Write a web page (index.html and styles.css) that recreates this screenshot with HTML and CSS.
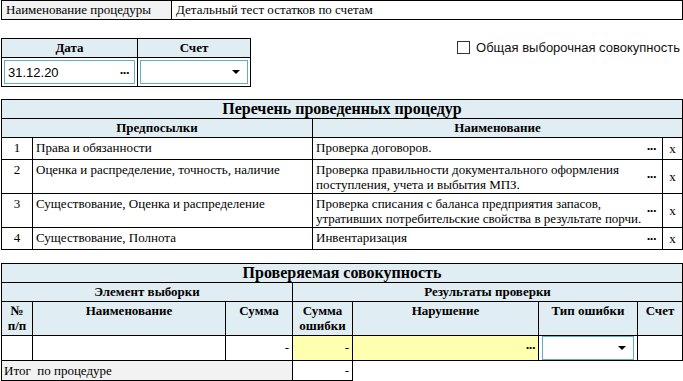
FILE: index.html
```html
<!DOCTYPE html>
<html lang="ru">
<head>
  <meta charset="UTF-8" />
  <title>Процедура</title>
  <link rel="stylesheet" href="styles.css">
</head>
<body>
  <table class="grid proc">
    <tr>
      <td class="label">Наименование процедуры</td>
      <td>Детальный тест остатков по счетам</td>
    </tr>
  </table>

  <div class="params">
    <table class="grid dates">
      <tr class="head">
        <th>Дата</th>
        <th>Счет</th>
      </tr>
      <tr class="inputs">
        <td>
          <div class="field">
            <span>31.12.20</span>
            <span class="dots">...</span>
          </div>
        </td>
        <td>
          <div class="field">
            <span></span>
            <span class="arrow"></span>
          </div>
        </td>
      </tr>
    </table>
    <label class="check">
      <span class="box"></span>
      Общая выборочная совокупность
    </label>
  </div>

  <table class="grid list">
    <tr class="title">
      <th colspan="5">Перечень проведенных процедур</th>
    </tr>
    <tr class="head">
      <th colspan="2">Предпосылки</th>
      <th colspan="3">Наименование</th>
    </tr>
    <tr class="short">
      <td class="num">1</td>
      <td class="pre">Права и обязанности</td>
      <td class="name">Проверка договоров.</td>
      <td class="more"><span class="dots">...</span></td>
      <td class="del">x</td>
    </tr>
    <tr class="tall">
      <td class="num">2</td>
      <td class="pre">Оценка и распределение, точность, наличие</td>
      <td class="name">Проверка правильности документального оформления поступления, учета и выбытия МПЗ.</td>
      <td class="more"><span class="dots">...</span></td>
      <td class="del">x</td>
    </tr>
    <tr class="tall">
      <td class="num">3</td>
      <td class="pre">Существование, Оценка и распределение</td>
      <td class="name">Проверка списания с баланса предприятия запасов, утративших потребительские свойства в результате порчи.</td>
      <td class="more"><span class="dots">...</span></td>
      <td class="del">x</td>
    </tr>
    <tr class="short">
      <td class="num">4</td>
      <td class="pre">Существование, Полнота</td>
      <td class="name">Инвентаризация</td>
      <td class="more"><span class="dots">...</span></td>
      <td class="del">x</td>
    </tr>
  </table>

  <table class="grid sample">
    <tr class="title">
      <th colspan="7">Проверяемая совокупность</th>
    </tr>
    <tr class="head">
      <th colspan="3">Элемент выборки</th>
      <th colspan="4">Результаты проверки</th>
    </tr>
    <tr class="cols">
      <th class="c-num">№<br>п/п</th>
      <th class="c-name">Наименование</th>
      <th class="c-sum">Сумма</th>
      <th class="c-err">Сумма<br>ошибки</th>
      <th class="c-viol">Нарушение</th>
      <th class="c-type">Тип ошибки</th>
      <th>Счет</th>
    </tr>
    <tr class="data">
      <td></td>
      <td></td>
      <td class="amount">-</td>
      <td class="amount yellow">-</td>
      <td class="amount yellow"><span class="dots">...</span></td>
      <td class="select-cell">
        <div class="field">
          <span></span>
          <span class="arrow"></span>
        </div>
      </td>
      <td></td>
    </tr>
    <tr class="total">
      <td colspan="3" class="label">Итог&nbsp; по процедуре</td>
      <td class="amount">-</td>
    </tr>
  </table>
</body>
</html>
```

FILE: styles.css
```css
body {
  margin: 0;
  padding: 0 0 0 1px;
  font-family: "Liberation Serif", "Times New Roman", serif;
  font-size: 13px;
  color: #000;
  background: #fff;
}

.grid {
  border-collapse: collapse;
}

.grid td,
.grid th {
  border: 1px solid #000;
  padding: 0 3px;
}

.grid th {
  background: #e0eef3;
  font-weight: bold;
  font-size: 13px;
}

.label {
  background: #f2f2f2;
}

/* procedure name */
.proc {
  width: 682px;
  font-size: 13px;
}

.proc td {
  height: 18px;
  padding: 0 4px;
}

.proc .label {
  width: 161px;
}

/* date / account */
.params {
  display: flex;
  justify-content: space-between;
  align-items: flex-start;
  margin-top: 18px;
}

.dates {
  width: 250px;
}

.dates th {
  height: 15px;
  padding: 0;
}

.dates th:first-child {
  width: 135px;
}

.dates td {
  height: 28px;
  padding: 0 2px;
}

.field {
  display: flex;
  justify-content: space-between;
  align-items: center;
  height: 22px;
  border: 1px solid #63adc6;
  padding: 0 5px 0 3px;
  font-family: "Liberation Sans", Arial, sans-serif;
  font-size: 13px;
  background: #fff;
}

.dots {
  font-family: "Liberation Sans", Arial, sans-serif;
  font-weight: bold;
  font-size: 13px;
  letter-spacing: -0.5px;
  line-height: 1;
  position: relative;
  top: -3px;
}

.arrow {
  width: 0;
  height: 0;
  border-left: 4px solid transparent;
  border-right: 4px solid transparent;
  border-top: 4px solid #000;
  margin-right: 2px;
}

.check {
  display: flex;
  align-items: center;
  gap: 6px;
  margin-top: 2px;
  margin-right: 3px;
  font-family: "Liberation Sans", Arial, sans-serif;
  font-size: 13px;
  color: #111;
}

.box {
  width: 11px;
  height: 11px;
  border: 1px solid #333;
  background: #fff;
}

/* procedures list */
.list {
  width: 682px;
  margin-top: 12px;
}

.title th {
  font-size: 16px;
  height: 18px;
  padding: 0;
}

.head th {
  height: 18px;
  padding: 0;
}

.list td {
  vertical-align: top;
  padding: 2px 3px 0;
  line-height: 15px;
}

.list .short td {
  height: 19px;
}

.list .tall td {
  height: 31px;
}

.list .num {
  width: 24px;
  text-align: center;
}

.list .pre {
  width: 273px;
}

.list .name {
  border-right: none;
  padding-right: 0;
}

.list .more {
  border-left: none;
  width: 14px;
  vertical-align: middle;
  padding: 0 6px 0 0;
  text-align: right;
}

.list .del {
  width: 19px;
  text-align: center;
  vertical-align: middle;
  padding: 0;
}

/* sample */
.sample {
  width: 682px;
  margin-top: 13px;
}

.cols th {
  vertical-align: top;
  height: 32px;
  padding: 1px 0 0;
  line-height: 15px;
}

.c-num {
  width: 30px;
}

.c-name {
  width: 192px;
}

.c-sum {
  width: 66px;
}

.c-err {
  width: 59px;
}

.c-viol {
  width: 185px;
}

.c-type {
  width: 98px;
}

.data td {
  height: 23px;
}

.amount {
  text-align: right;
}

.yellow {
  background: #ffffb0;
}

.select-cell {
  padding: 0 2px;
}

.total td {
  height: 19px;
}

.total .label {
  padding-left: 2px;
}
```
